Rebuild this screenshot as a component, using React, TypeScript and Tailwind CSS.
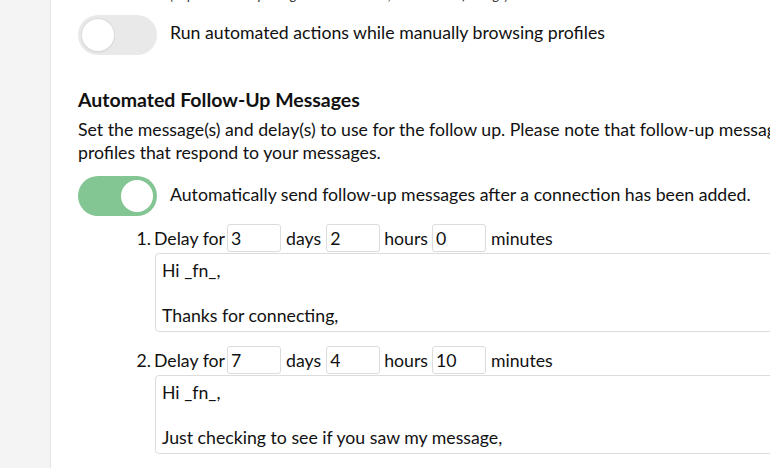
const font = { fontFamily: 'Lato, "Noto Sans", sans-serif' };

function Toggle({ on }: { on: boolean }) {
  return (
    <div
      className={`relative h-[40px] w-[79px] shrink-0 rounded-full ${
        on ? 'bg-[#84c594]' : 'bg-[#e9e9e9]'
      }`}
    >
      <div
        className={`absolute top-[4px] h-[32px] w-[32px] rounded-full bg-white ${
          on ? 'left-[43px]' : 'left-[4px] shadow-[0_0_0_1px_#dcdcdc,0_1px_2px_rgba(0,0,0,0.15)]'
        }`}
      />
    </div>
  );
}

function NumInput({ value }: { value: string }) {
  return (
    <div className="h-[28px] w-[54px] rounded-[3px] border border-[#dcdcdc] pl-[3px] pt-[1px] leading-[26px]">
      {value}
    </div>
  );
}

function FollowUp({ n, days, hours, minutes, lines }: { n: number; days: string; hours: string; minutes: string; lines: string[] }) {
  return (
    <div className="flex flex-col">
      <div className="flex h-[28px] items-center [&>span]:mt-[2px]">
        <span className="w-[76px] pr-[3px] text-right">{n}.</span>
        <span className="mr-[2px]">Delay for</span>
        <NumInput value={days} />
        <span className="mx-[5px]">days</span>
        <NumInput value={hours} />
        <span className="mx-[4px]">hours</span>
        <NumInput value={minutes} />
        <span className="ml-[5px]">minutes</span>
      </div>
      <div className="ml-[77px] mt-[1px] h-[79px] w-[700px] rounded-[4px] border border-[#dcdcdc] px-[6px] pt-[6px] leading-[22.5px]">
        {lines.map((l, i) => (
          <div key={i} className="h-[22.5px]">
            {l}
          </div>
        ))}
      </div>
    </div>
  );
}

export default function App() {
  return (
    <div className="flex h-[468px] w-[770px] overflow-hidden bg-white text-[17.7px] text-[#111]" style={font}>
      <div className="w-[51px] shrink-0 border-r border-[#e4e4e4] bg-[#f4f4f4]" />
      <div className="flex min-w-0 flex-1 flex-col pl-[27px]">
        <div className="-mt-[13px] ml-[92px] h-[16px] whitespace-nowrap text-[14px] italic leading-[16px] text-[#333]">
          (Separate multiple tags with a comma, maximum of 5 tags)
        </div>
        <div className="mt-[12px] flex items-center gap-[13px] whitespace-nowrap">
          <Toggle on={false} />
          <span className="-mt-[3px]">Run automated actions while manually browsing profiles</span>
        </div>
        <h2 className="mt-[34px] whitespace-nowrap text-[19.5px] font-bold leading-[22px]">
          Automated Follow-Up Messages
        </h2>
        <p className="mt-[8px] whitespace-nowrap leading-[22.5px]">
          Set the message(s) and delay(s) to use for the follow up. Please note that follow-up messages will not be sent to
          <br />
          profiles that respond to your messages.
        </p>
        <div className="mt-[12px] flex items-center gap-[13px] whitespace-nowrap">
          <Toggle on={true} />
          <span className="-mt-[1px]">Automatically send follow-up messages after a connection has been added.</span>
        </div>
        <div className="mt-[8px] flex flex-col gap-[14px] whitespace-nowrap">
          <FollowUp n={1} days="3" hours="2" minutes="0" lines={['Hi _fn_,', '', 'Thanks for connecting,']} />
          <FollowUp
            n={2}
            days="7"
            hours="4"
            minutes="10"
            lines={['Hi _fn_,', '', 'Just checking to see if you saw my message,']}
          />
        </div>
      </div>
    </div>
  );
}
